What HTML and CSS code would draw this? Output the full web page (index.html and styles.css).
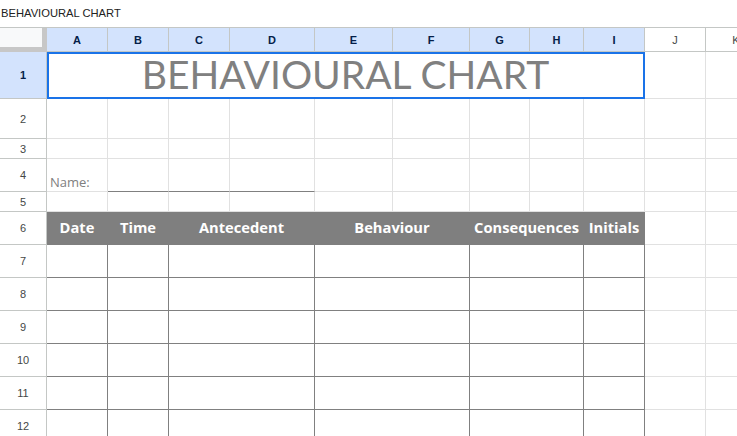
FILE: index.html
```html
<!DOCTYPE html>
<html>
<head>
<meta charset="utf-8">
<link rel="stylesheet" href="styles.css">
</head>
<body>
<div class="topbar">BEHAVIOURAL CHART</div>
<div class="sheet">
  <!-- column headers -->
  <div class="corner"></div>
  <div class="ch sel">A</div><div class="ch sel">B</div><div class="ch sel">C</div><div class="ch sel">D</div><div class="ch sel">E</div><div class="ch sel">F</div><div class="ch sel">G</div><div class="ch sel">H</div><div class="ch sel">I</div><div class="ch">J</div><div class="ch">K</div>

  <!-- row 1 -->
  <div class="rh sel">1</div>
  <div class="c title">BEHAVIOURAL CHART</div>
  <div class="c"></div><div class="c"></div>

  <!-- row 2 -->
  <div class="rh">2</div>
  <div class="c"></div><div class="c"></div><div class="c"></div><div class="c"></div><div class="c"></div><div class="c"></div><div class="c"></div><div class="c"></div><div class="c"></div><div class="c"></div><div class="c"></div>

  <!-- row 3 -->
  <div class="rh">3</div>
  <div class="c"></div><div class="c"></div><div class="c"></div><div class="c"></div><div class="c"></div><div class="c"></div><div class="c"></div><div class="c"></div><div class="c"></div><div class="c"></div><div class="c"></div>

  <!-- row 4 -->
  <div class="rh">4</div>
  <div class="c name">Name:</div><div class="c ul"></div><div class="c ul"></div><div class="c ul"></div><div class="c"></div><div class="c"></div><div class="c"></div><div class="c"></div><div class="c"></div><div class="c"></div><div class="c"></div>

  <!-- row 5 -->
  <div class="rh">5</div>
  <div class="c"></div><div class="c"></div><div class="c"></div><div class="c"></div><div class="c"></div><div class="c"></div><div class="c"></div><div class="c"></div><div class="c"></div><div class="c"></div><div class="c"></div>

  <!-- row 6: table header -->
  <div class="rh">6</div>
  <div class="th">Date</div><div class="th">Time</div><div class="th span2">Antecedent</div><div class="th span2">Behaviour</div><div class="th span2">Consequences</div><div class="th">Initials</div><div class="c"></div><div class="c"></div>

  <!-- rows 7-12 -->
  <div class="rh">7</div>
  <div class="td"></div><div class="td"></div><div class="td span2"></div><div class="td span2"></div><div class="td span2"></div><div class="td"></div><div class="c"></div><div class="c"></div>
  <div class="rh">8</div>
  <div class="td"></div><div class="td"></div><div class="td span2"></div><div class="td span2"></div><div class="td span2"></div><div class="td"></div><div class="c"></div><div class="c"></div>
  <div class="rh">9</div>
  <div class="td"></div><div class="td"></div><div class="td span2"></div><div class="td span2"></div><div class="td span2"></div><div class="td"></div><div class="c"></div><div class="c"></div>
  <div class="rh">10</div>
  <div class="td"></div><div class="td"></div><div class="td span2"></div><div class="td span2"></div><div class="td span2"></div><div class="td"></div><div class="c"></div><div class="c"></div>
  <div class="rh">11</div>
  <div class="td"></div><div class="td"></div><div class="td span2"></div><div class="td span2"></div><div class="td span2"></div><div class="td"></div><div class="c"></div><div class="c"></div>
  <div class="rh">12</div>
  <div class="td"></div><div class="td"></div><div class="td span2"></div><div class="td span2"></div><div class="td span2"></div><div class="td"></div><div class="c"></div><div class="c"></div>
</div>
</body>
</html>
```
FILE: styles.css
```css
* { box-sizing: border-box; }
html, body {
  margin: 0;
  padding: 0;
  background: #ffffff;
  overflow: hidden;
  width: 737px;
  height: 436px;
}
.topbar {
  height: 28px;
  border-bottom: 1px solid #c4c7c5;
  font-family: "Liberation Sans", Arial, sans-serif;
  font-size: 11.2px;
  color: #222222;
  padding-left: 1px;
  line-height: 26px;
  white-space: nowrap;
}
.sheet {
  display: grid;
  width: 767px;
  grid-template-columns: 47px 61px 61px 61px 85px 78px 77px 60px 54px 61px 61px 61px;
  grid-template-rows: 24px 47px 40px 20px 33px 20px 33px repeat(6, 33px);
}
.corner {
  background: #f8f9fa;
  border-right: 5px solid #c7c7c7;
  border-bottom: 5px solid #c7c7c7;
}
.ch {
  background: #ffffff;
  border-right: 1px solid #c4c7c5;
  border-bottom: 1px solid #c4c7c5;
  font-family: "Liberation Sans", Arial, sans-serif;
  font-size: 11px;
  color: #444746;
  display: flex;
  align-items: center;
  justify-content: center;
}
.ch.sel {
  background: #d3e3fd;
  color: #041e49;
  font-weight: bold;
}
.rh {
  background: #ffffff;
  border-right: 1px solid #c4c7c5;
  border-bottom: 1px solid #c4c7c5;
  font-family: "Liberation Sans", Arial, sans-serif;
  font-size: 11px;
  color: #444746;
  display: flex;
  align-items: center;
  justify-content: center;
}
.rh.sel {
  background: #d3e3fd;
  color: #041e49;
  font-weight: bold;
}
.c {
  border-right: 1px solid #e1e1e1;
  border-bottom: 1px solid #e1e1e1;
}
.title {
  grid-column: span 9;
  font-family: Lato, "Open Sans", sans-serif;
  font-size: 39px;
  color: #808080;
  display: flex;
  align-items: center;
  justify-content: center;
  padding-bottom: 2px;
  outline: 2px solid #1a73e8;
  outline-offset: -2px;
  white-space: nowrap;
}
.name {
  font-family: "Open Sans", sans-serif;
  font-size: 13px;
  color: #808080;
  display: flex;
  align-items: flex-end;
  padding-left: 3px;
  padding-bottom: 0px;
  white-space: nowrap;
}
.ul {
  border-bottom: 1px solid #808080;
}
.th {
  background: #7f7f7f;
  border-right: 1px solid #7f7f7f;
  border-bottom: 1px solid #7f7f7f;
  color: #ffffff;
  font-family: "Open Sans", sans-serif;
  font-weight: bold;
  font-size: 14.7px;
  display: flex;
  align-items: center;
  justify-content: center;
  padding-bottom: 3px;
  white-space: nowrap;
}
.td {
  border-right: 1px solid #808080;
  border-bottom: 1px solid #808080;
}
.span2 {
  grid-column: span 2;
}
```
